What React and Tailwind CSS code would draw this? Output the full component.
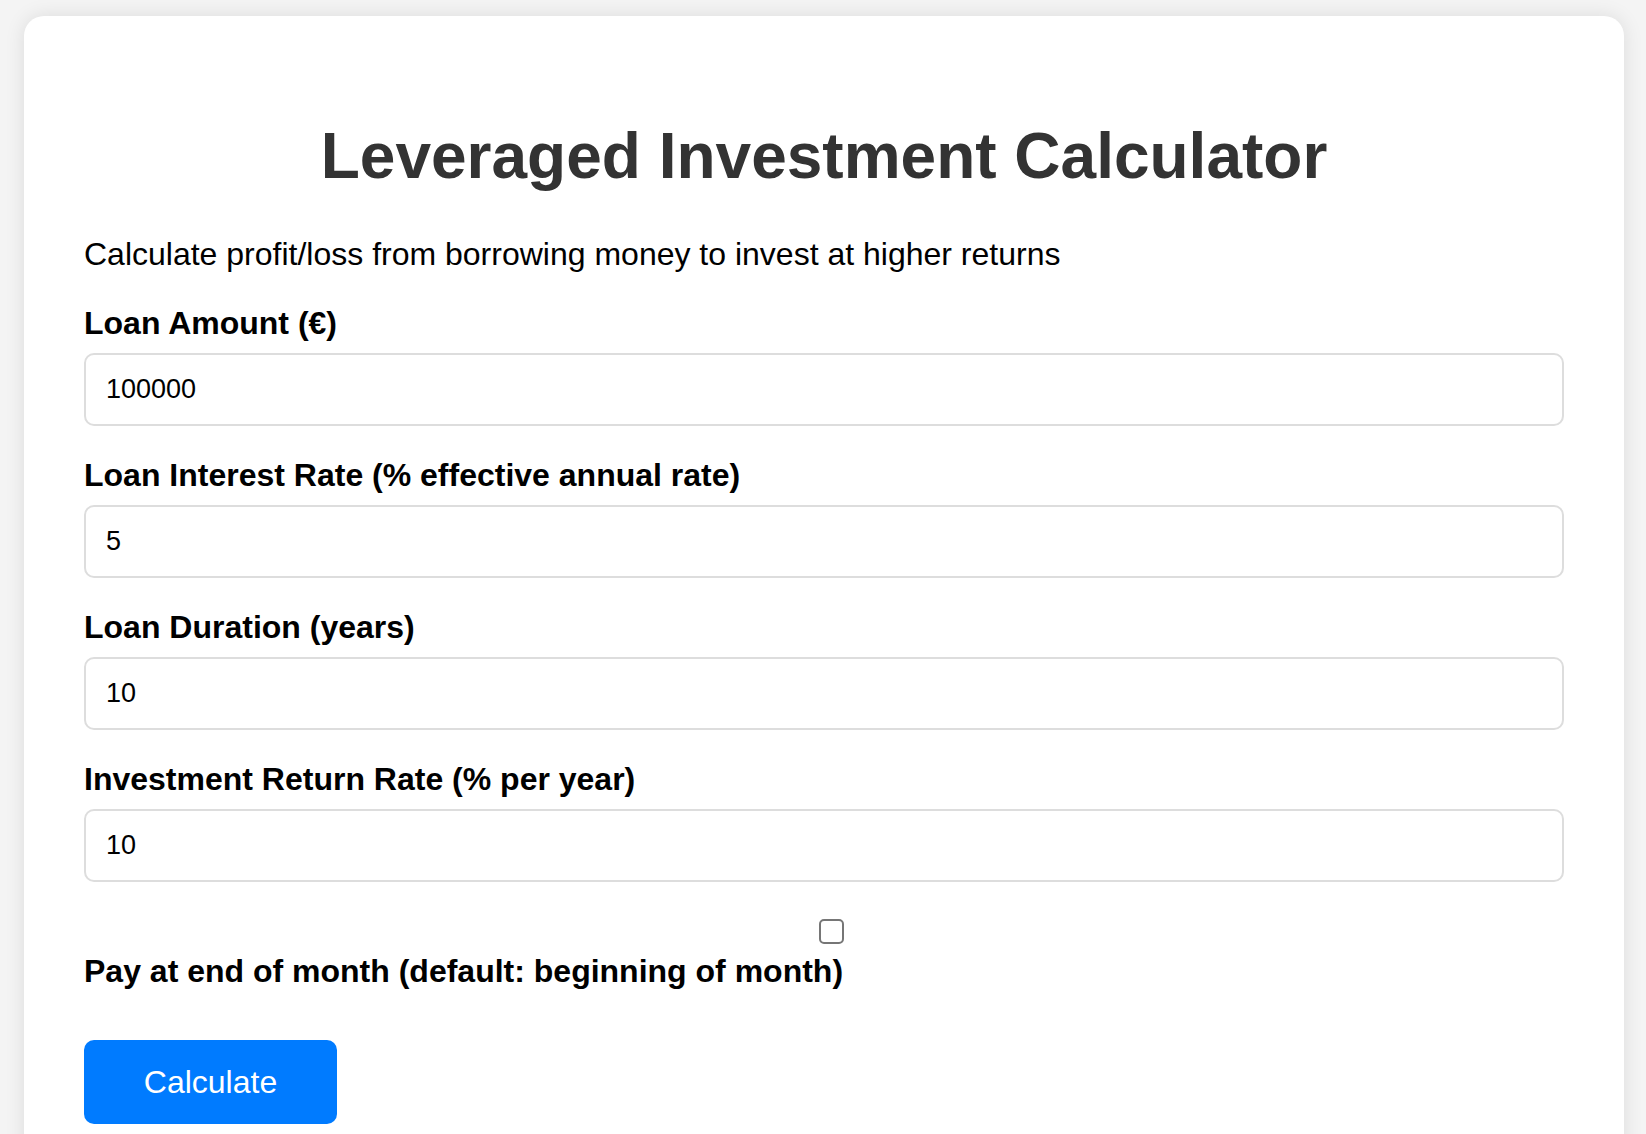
import { useState } from 'react';

const FIELDS = [
  { id: 'loanAmount', label: 'Loan Amount (€)', value: '100000' },
  { id: 'loanRate', label: 'Loan Interest Rate (% effective annual rate)', value: '5' },
  { id: 'loanYears', label: 'Loan Duration (years)', value: '10' },
  { id: 'investRate', label: 'Investment Return Rate (% per year)', value: '10' },
];

export default function App() {
  const [values, setValues] = useState(
    Object.fromEntries(FIELDS.map(f => [f.id, f.value]))
  );
  const [payAtEnd, setPayAtEnd] = useState(false);

  const update = (id, v) => setValues(prev => ({ ...prev, [id]: v }));

  return (
    <div className="min-h-screen bg-[#f4f4f4] pt-[16px] font-['Liberation_Sans',Arial,sans-serif]">
      <div className="ml-[24px] w-[1600px] min-h-[1200px] bg-white rounded-[20px] shadow-[0_0_20px_rgba(0,0,0,0.1)] p-[60px]">
        <h1 className="mt-[43px] mb-[43px] text-center text-[64px] leading-[74px] font-bold text-[#333]">
          Leveraged Investment Calculator
        </h1>
        <p className="text-[32px] leading-[37px] text-black mb-[32px]">
          Calculate profit/loss from borrowing money to invest at higher returns
        </p>

        {FIELDS.map(f => (
          <div key={f.id} className="mb-[31px]">
            <label htmlFor={f.id} className="block text-[32px] leading-[37px] font-bold text-black mb-[11px]">
              {f.label}
            </label>
            <input
              id={f.id}
              type="number"
              value={values[f.id]}
              onChange={e => update(f.id, e.target.value)}
              className="block w-full h-[73px] px-[20px] border-2 border-[#dddddd] rounded-[10px] text-[27px] text-black outline-none [appearance:textfield] [&::-webkit-inner-spin-button]:appearance-none"
            />
          </div>
        ))}

        <div>
          <div className="pt-[6px] pl-[735px]">
            <input
              id="payAtEnd"
              type="checkbox"
              checked={payAtEnd}
              onChange={e => setPayAtEnd(e.target.checked)}
              className="block appearance-none w-[25px] h-[25px] border-2 border-[#767676] rounded-[5px] bg-white checked:bg-[#007bff] checked:border-[#007bff]"
            />
          </div>
          <label htmlFor="payAtEnd" className="block mt-[9px] text-[32px] leading-[37px] font-bold text-black">
            Pay at end of month (default: beginning of month)
          </label>
        </div>

        <button className="mt-[50px] w-[253px] h-[84px] bg-[#007bff] text-white text-[32px] rounded-[10px]">
          Calculate
        </button>
      </div>
    </div>
  );
}
